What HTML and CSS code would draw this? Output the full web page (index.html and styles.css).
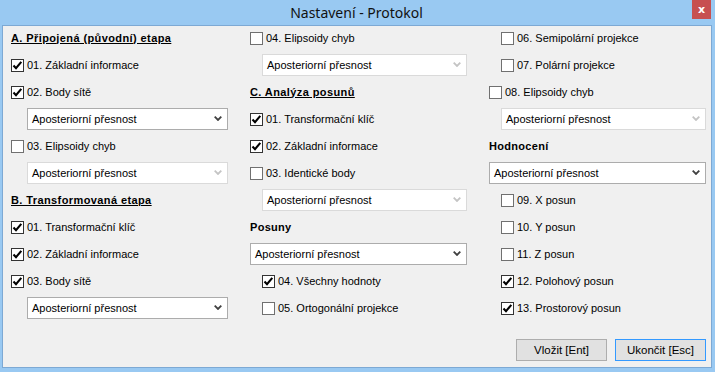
FILE: index.html
```html
<!DOCTYPE html>
<html lang="cs">
<head>
  <meta charset="UTF-8" />
  <title>Nastavení - Protokol</title>
  <link rel="stylesheet" href="styles.css">
</head>
<body>

  <div class="window">
    <!-- title bar -->
    <div class="titlebar">
      <span class="title">Nastavení - Protokol</span>
      <button class="close">x</button>
    </div>

    <div class="client">
      <div class="columns">

        <!-- A + B -->
        <div class="col">
          <div class="row heading">A. Připojená (původní) etapa</div>
          <div class="row check"><span class="box on"><svg viewBox="0 0 11 11"><path d="M1.5 5.5 L4 8.2 L9.3 1.8"/></svg></span>01. Základní informace</div>
          <div class="row check"><span class="box on"><svg viewBox="0 0 11 11"><path d="M1.5 5.5 L4 8.2 L9.3 1.8"/></svg></span>02. Body sítě</div>
          <div class="row ind16"><div class="combo">Aposteriorní přesnost<svg viewBox="0 0 8 5"><path d="M0.7 0.7 L4 4 L7.3 0.7"/></svg></div></div>
          <div class="row check"><span class="box"></span>03. Elipsoidy chyb</div>
          <div class="row ind16"><div class="combo off">Aposteriorní přesnost<svg viewBox="0 0 8 5"><path d="M0.7 0.7 L4 4 L7.3 0.7"/></svg></div></div>
          <div class="row heading">B. Transformovaná etapa</div>
          <div class="row check"><span class="box on"><svg viewBox="0 0 11 11"><path d="M1.5 5.5 L4 8.2 L9.3 1.8"/></svg></span>01. Transformační klíč</div>
          <div class="row check"><span class="box on"><svg viewBox="0 0 11 11"><path d="M1.5 5.5 L4 8.2 L9.3 1.8"/></svg></span>02. Základní informace</div>
          <div class="row check"><span class="box on"><svg viewBox="0 0 11 11"><path d="M1.5 5.5 L4 8.2 L9.3 1.8"/></svg></span>03. Body sítě</div>
          <div class="row ind16"><div class="combo">Aposteriorní přesnost<svg viewBox="0 0 8 5"><path d="M0.7 0.7 L4 4 L7.3 0.7"/></svg></div></div>
        </div>

        <!-- A/B 04 + C -->
        <div class="col">
          <div class="row check"><span class="box"></span>04. Elipsoidy chyb</div>
          <div class="row ind12"><div class="combo off">Aposteriorní přesnost<svg viewBox="0 0 8 5"><path d="M0.7 0.7 L4 4 L7.3 0.7"/></svg></div></div>
          <div class="row heading">C. Analýza posunů</div>
          <div class="row check"><span class="box on"><svg viewBox="0 0 11 11"><path d="M1.5 5.5 L4 8.2 L9.3 1.8"/></svg></span>01. Transformační klíč</div>
          <div class="row check"><span class="box on"><svg viewBox="0 0 11 11"><path d="M1.5 5.5 L4 8.2 L9.3 1.8"/></svg></span>02. Základní informace</div>
          <div class="row check"><span class="box"></span>03. Identické body</div>
          <div class="row ind12"><div class="combo off">Aposteriorní přesnost<svg viewBox="0 0 8 5"><path d="M0.7 0.7 L4 4 L7.3 0.7"/></svg></div></div>
          <div class="row label">Posuny</div>
          <div class="row"><div class="combo">Aposteriorní přesnost<svg viewBox="0 0 8 5"><path d="M0.7 0.7 L4 4 L7.3 0.7"/></svg></div></div>
          <div class="row check ind12"><span class="box on"><svg viewBox="0 0 11 11"><path d="M1.5 5.5 L4 8.2 L9.3 1.8"/></svg></span>04. Všechny hodnoty</div>
          <div class="row check ind12"><span class="box"></span>05. Ortogonální projekce</div>
        </div>

        <!-- C continued -->
        <div class="col">
          <div class="row check ind12"><span class="box"></span>06. Semipolární projekce</div>
          <div class="row check ind12"><span class="box"></span>07. Polární projekce</div>
          <div class="row check"><span class="box"></span>08. Elipsoidy chyb</div>
          <div class="row ind12"><div class="combo off">Aposteriorní přesnost<svg viewBox="0 0 8 5"><path d="M0.7 0.7 L4 4 L7.3 0.7"/></svg></div></div>
          <div class="row label">Hodnocení</div>
          <div class="row"><div class="combo">Aposteriorní přesnost<svg viewBox="0 0 8 5"><path d="M0.7 0.7 L4 4 L7.3 0.7"/></svg></div></div>
          <div class="row check ind12"><span class="box"></span>09. X posun</div>
          <div class="row check ind12"><span class="box"></span>10. Y posun</div>
          <div class="row check ind12"><span class="box"></span>11. Z posun</div>
          <div class="row check ind12"><span class="box on"><svg viewBox="0 0 11 11"><path d="M1.5 5.5 L4 8.2 L9.3 1.8"/></svg></span>12. Polohový posun</div>
          <div class="row check ind12"><span class="box on"><svg viewBox="0 0 11 11"><path d="M1.5 5.5 L4 8.2 L9.3 1.8"/></svg></span>13. Prostorový posun</div>
        </div>

      </div>

      <div class="actions">
        <button class="btn">Vložit [Ent]</button>
        <button class="btn default">Ukončit [Esc]</button>
      </div>
    </div>
  </div>

</body>
</html>
```

FILE: styles.css
```css
* { margin: 0; padding: 0; box-sizing: border-box; }

html, body {
  width: 715px;
  height: 372px;
  overflow: hidden;
  background: #99c9f2;
  font-family: 'Liberation Sans', Arial, sans-serif;
  font-size: 11px;
  color: #000;
}

.window {
  width: 715px;
  height: 372px;
  display: flex;
  flex-direction: column;
  background: #99c9f2;
}

.titlebar {
  height: 25px;
  flex: none;
  display: flex;
  justify-content: center;
  align-items: center;
  position: relative;
}

.title {
  font-family: 'Noto Sans', sans-serif;
  font-size: 14px;
  color: #111;
  margin-top: -1px;
  margin-left: -2px;
}

.close {
  position: absolute;
  top: 0;
  right: 4px;
  width: 19px;
  height: 19px;
  border: none;
  background: #c75050;
  color: #fff;
  font-family: 'DejaVu Sans', sans-serif;
  font-weight: bold;
  font-size: 11px;
  line-height: 17px;
}

.client {
  flex: 1;
  margin: 0 3px 4px 2px;
  border: 1px solid #7da9d4;
  background: #f0f0f0;
  display: flex;
  flex-direction: column;
}

.columns {
  display: grid;
  grid-template-columns: 217px 217px 217px;
  column-gap: 22px;
  padding-left: 8px;
  margin-top: -2px;
}

.row {
  height: 27px;
  display: flex;
  align-items: center;
  white-space: nowrap;
}

.ind12 { padding-left: 12px; }
.ind16 { padding-left: 16px; }

.heading {
  font-weight: bold;
  text-decoration: underline;
  letter-spacing: 0.4px;
}

.label {
  font-weight: bold;
  letter-spacing: 0.3px;
}

.box {
  width: 13px;
  height: 13px;
  border: 1px solid #707070;
  background: #fff;
  margin-right: 3px;
  margin-top: 1px;
  flex: none;
  display: flex;
}

.box.on { border-color: #333; }

.box svg {
  width: 11px;
  height: 11px;
}

.box path {
  fill: none;
  stroke: #000;
  stroke-width: 2.1;
}

.combo {
  flex: 1;
  height: 22px;
  border: 1px solid #acacac;
  background: #fff;
  display: flex;
  align-items: center;
  justify-content: space-between;
  padding: 0 5px 0 4px;
}

.combo svg {
  width: 8px;
  height: 5px;
}

.combo path {
  fill: none;
  stroke: #404040;
  stroke-width: 1.8;
}

.combo.off { border-color: #dadada; }
.combo.off path { stroke: #c4c4c4; }

.actions {
  display: flex;
  justify-content: flex-end;
  gap: 8px;
  margin-top: 18px;
  padding-right: 5px;
}

.btn {
  width: 91px;
  height: 22px;
  border: 1px solid #adadad;
  background: #e1e1e1;
  font-family: 'Liberation Sans', Arial, sans-serif;
  font-size: 11.5px;
  color: #000;
}

.btn.default { border-color: #3399ff; }
```
